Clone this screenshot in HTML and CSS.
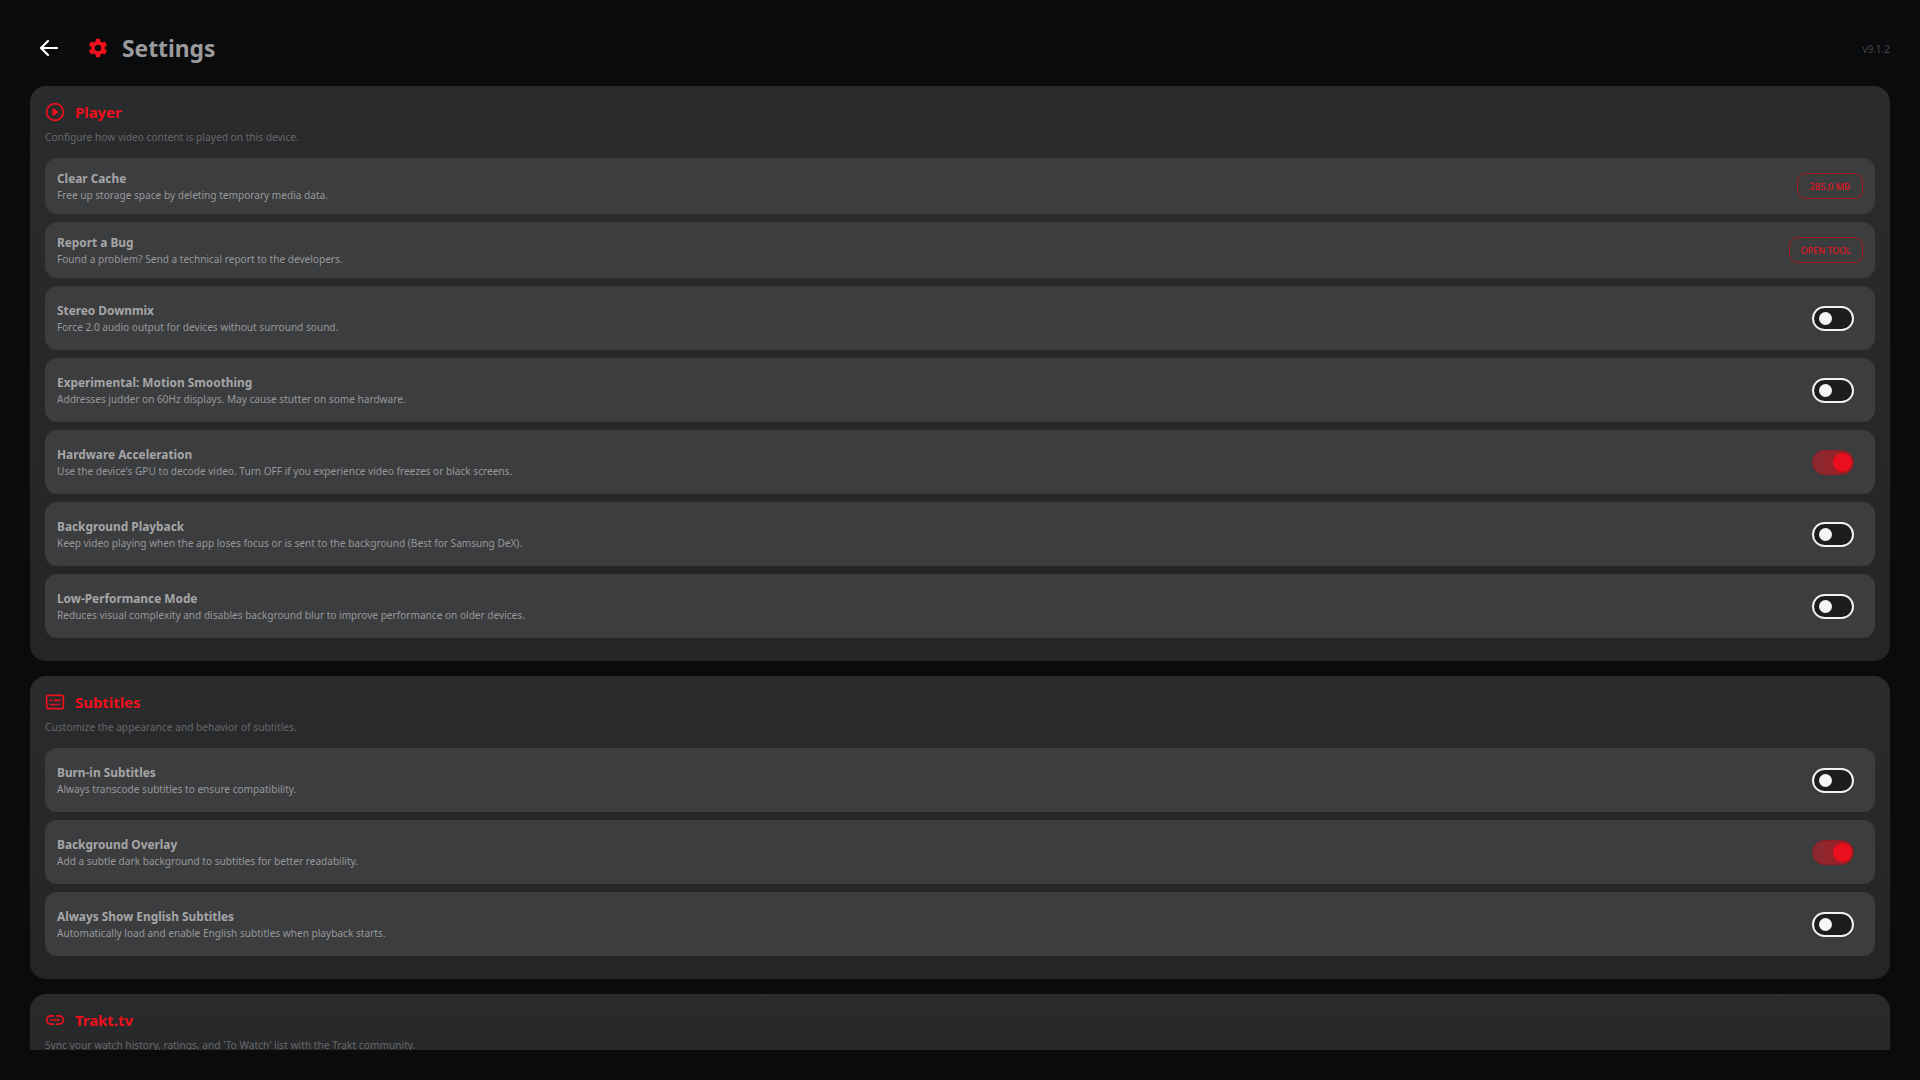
FILE: index.html
```html
<!DOCTYPE html>
<html lang="en">
<head>
<meta charset="utf-8">
<title>Settings</title>
<link rel="stylesheet" href="styles.css">
</head>
<body>
<header class="top">
  <svg class="back" viewBox="0 0 24 24" fill="none" stroke="#fff" stroke-width="2.2" stroke-linecap="round" stroke-linejoin="round"><path d="M20 12H4.500M11 5l-7 7 7 7"/></svg>
  <svg class="gear" viewBox="0 0 24 24" fill="#f0101c"><path fill-rule="evenodd" d="M19.400 13c.1-.3.1-.7.1-1s0-.7-.1-1l2.500-2-2.400-4.100-3 1.200c-.5-.4-1.100-.7-1.700-1L14.400 2H9.600l-.4 3.100c-.6.3-1.200.6-1.700 1l-3-1.200L2.100 9l2.500 2c-.1.3-.1.7-.1 1s0 .7.1 1l-2.500 2 2.400 4.100 3-1.200c.5.4 1.100.7 1.700 1l.4 3.100h4.800l.4-3.100c.6-.3 1.200-.6 1.700-1l3 1.200 2.400-4.100zM12 15.500a3.500 3.500 0 1 1 0-7 3.500 3.500 0 0 1 0 7z"/></svg>
  <h1 class="page-title">Settings</h1>
  <span class="version">v9.1.2</span>
</header>
<main class="scroller">
  <section class="card">
    <div class="card-head">
      <svg class="card-icon" viewBox="0 0 24 24" fill="none" stroke="#f0101c" stroke-width="2"><circle cx="12" cy="12" r="10"/><path d="M10 8.500l5 3.500-5 3.500z" fill="#f0101c" stroke-linejoin="round"/></svg>
      <h2>Player</h2>
    </div>
    <p class="card-desc">Configure how video content is played on this device.</p>
    <div class="rows">
      <div class="row short"><div><h3>Clear Cache</h3><p>Free up storage space by deleting temporary media data.</p></div><button class="btn">285.0 MB</button></div>
      <div class="row short"><div><h3>Report a Bug</h3><p>Found a problem? Send a technical report to the developers.</p></div><button class="btn tool">OPEN TOOL</button></div>
      <div class="row"><div><h3>Stereo Downmix</h3><p>Force 2.0 audio output for devices without surround sound.</p></div><span class="toggle"></span></div>
      <div class="row"><div><h3>Experimental: Motion Smoothing</h3><p>Addresses judder on 60Hz displays. May cause stutter on some hardware.</p></div><span class="toggle"></span></div>
      <div class="row"><div><h3>Hardware Acceleration</h3><p>Use the device's GPU to decode video. Turn OFF if you experience video freezes or black screens.</p></div><span class="toggle on"></span></div>
      <div class="row"><div><h3>Background Playback</h3><p>Keep video playing when the app loses focus or is sent to the background (Best for Samsung DeX).</p></div><span class="toggle"></span></div>
      <div class="row"><div><h3>Low-Performance Mode</h3><p>Reduces visual complexity and disables background blur to improve performance on older devices.</p></div><span class="toggle"></span></div>
    </div>
  </section>
  <section class="card">
    <div class="card-head">
      <svg class="card-icon" viewBox="0 0 24 24" fill="none" stroke="#f0101c" stroke-width="2" stroke-linecap="round"><rect x="2" y="4" width="20" height="16" rx="2"/><path d="M6 10h2M11 10h7M6 15h9M18 15h0"/></svg>
      <h2>Subtitles</h2>
    </div>
    <p class="card-desc">Customize the appearance and behavior of subtitles.</p>
    <div class="rows">
      <div class="row"><div><h3>Burn-in Subtitles</h3><p>Always transcode subtitles to ensure compatibility.</p></div><span class="toggle"></span></div>
      <div class="row"><div><h3>Background Overlay</h3><p>Add a subtle dark background to subtitles for better readability.</p></div><span class="toggle on"></span></div>
      <div class="row"><div><h3>Always Show English Subtitles</h3><p>Automatically load and enable English subtitles when playback starts.</p></div><span class="toggle"></span></div>
    </div>
  </section>
  <section class="card">
    <div class="card-head">
      <svg class="card-icon" viewBox="0 0 24 24" fill="none" stroke="#f0101c" stroke-width="2" stroke-linecap="round"><path d="M10 7H7a5 5 0 0 0 0 10h3M14 7h3a5 5 0 0 1 0 10h-3M7 12h10"/></svg>
      <h2>Trakt.tv</h2>
    </div>
    <p class="card-desc">Sync your watch history, ratings, and 'To Watch' list with the Trakt community.</p>
  </section>
</main>
</body>
</html>
```
FILE: styles.css
```css
* { box-sizing: border-box; }
html, body { margin: 0; height: 100%; }
body {
  height: 1080px;
  overflow: hidden;
  display: flex;
  flex-direction: column;
  padding: 0 30px 30px;
  background: #0a0b0d;
  font-family: "Noto Sans", "Open Sans", sans-serif;
}
.top { height: 86px; flex: none; display: flex; align-items: center; padding: 10px 0 0 7px; }
.back { width: 24px; height: 24px; flex: none; }
.gear { width: 22px; height: 22px; flex: none; margin-left: 26px; }
.page-title { margin: 2px 0 0 13px; font-size: 22.800px; font-weight: 700; color: #9b9b9d; line-height: 32px; }
.version { margin: 2px 0 0 auto; font-size: 10px; color: #46474a; }
.scroller { flex: 1; min-height: 0; overflow: hidden; display: flex; flex-direction: column; gap: 15px; }
.card { flex: none; border-radius: 16px; padding: 14px 15px 23px; background: linear-gradient(#2a2b2d, #242527); }
.card-head { display: flex; align-items: center; gap: 10px; height: 24px; }
.card-icon { width: 20px; height: 20px; flex: none; }
.card-head h2 { margin: 0; font-size: 14.900px; font-weight: 700; color: #f0101c; }
.card-desc { margin: 6px 0 14px; font-size: 10.200px; line-height: 14px; color: #67686b; }
.rows { display: flex; flex-direction: column; gap: 8px; }
.row { height: 64px; display: flex; align-items: center; justify-content: space-between; padding: 0 12px; border-radius: 12px; background: #3c3d3f; }
.row.short { height: 56px; }
.row h3 { margin: 0; font-size: 11.850px; line-height: 17px; font-weight: 700; color: #a6a6a8; }
.row p { margin: 1px 0 0; font-size: 10.100px; line-height: 15px; color: #98989b; }
.btn { height: 26px; padding: 0 12px; border: 1px solid #a01c24; border-radius: 8px; background: transparent; color: #f4101c; font: 9.200px "Noto Sans", sans-serif; }
.btn.tool { padding: 0 11px; font-size: 9px; }
.toggle { position: relative; width: 42px; height: 25px; margin-right: 9px; border: 2px solid #f1f1f1; border-radius: 13px; background: #1b1d1f; }
.toggle::after { content: ""; position: absolute; left: 5px; top: 4px; width: 13px; height: 13px; border-radius: 50%; background: #f6f6f6; }
.toggle.on { border: 1px solid #8f1a22; background: linear-gradient(90deg, #8a2a30, #a01c26); }
.toggle.on::after { left: 20px; top: 2px; width: 19px; height: 19px; background: #ea0f1c; }
```
